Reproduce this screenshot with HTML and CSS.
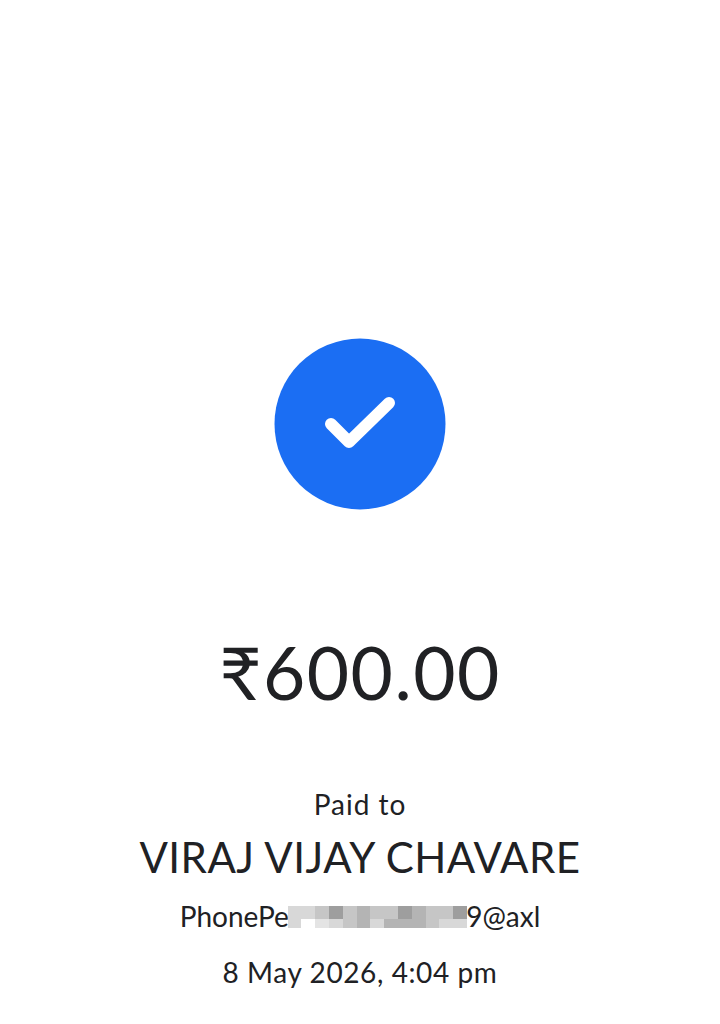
FILE: index.html
```html
<!DOCTYPE html>
<html lang="en">
<head>
    <meta charset="UTF-8">
    <meta name="viewport" content="width=device-width, initial-scale=1.0">
    <title>Payment successful</title>
    <link rel="stylesheet" href="styles.css">
</head>
<body>
    <div class="receipt">
        <svg class="tick" width="172" height="172" viewBox="0 0 172 172">
            <circle cx="86" cy="86" r="85.5" fill="#1b6ef3"/>
            <path d="M57 86 L75 104 L115 65" fill="none" stroke="#fff" stroke-width="12" stroke-linecap="round" stroke-linejoin="round"/>
        </svg>
        <div class="amount">₹600.00</div>
        <div class="paid-to">Paid to</div>
        <div class="name">VIRAJ VIJAY CHAVARE</div>
        <div class="upi">
            PhonePe<span class="hidden-part">xxxxxxxxxxxxx</span>9@axl
            <div class="blur">
                <i class="r2"></i><i class="r2"></i><i class="r3"></i><i class="r5"></i><i class="r3"></i><i class="r4"></i><i class="r3"></i><i class="r3"></i><i class="r5"></i><i class="r4"></i><i class="r3"></i><i class="r3"></i><i class="r5"></i>
                <i class="r2"></i><i class="r0"></i><i class="r1"></i><i class="r2"></i><i class="r3"></i><i class="r4"></i><i class="r2"></i><i class="r4"></i><i class="r4"></i><i class="r4"></i><i class="r3"></i><i class="r2"></i><i class="r2"></i>
            </div>
        </div>
        <div class="date">8 May 2026, 4:04 pm</div>
    </div>
</body>
</html>
```

FILE: styles.css
```css
body {
    margin: 0;
    background: #fff;
    color: #202124;
    font-family: Lato, "Noto Sans", sans-serif;
}
.receipt {
    display: flex;
    flex-direction: column;
    align-items: center;
    padding-top: 338px;
}
.tick {
    display: block;
}
.amount {
    margin-top: 120px;
    font-size: 73px;
    line-height: 84px;
    letter-spacing: 1.5px;
}
.paid-to {
    margin-top: 72px;
    font-size: 28px;
    line-height: 36px;
    letter-spacing: 1px;
}
.name {
    margin-top: 9px;
    font-size: 42px;
    line-height: 52px;
    letter-spacing: 0.5px;
}
.upi {
    position: relative;
    margin-top: 15px;
    font-size: 28px;
    line-height: 36px;
}
.hidden-part {
    visibility: hidden;
    letter-spacing: -0.3px;
}
.blur {
    position: absolute;
    left: 108px;
    top: 8px;
    display: grid;
    grid-template-columns: repeat(13, 13.8px);
    grid-template-rows: 13px 9px;
}
.r0 { background: #fff; }
.r1 { background: #e4e4e4; }
.r2 { background: #d8d8d8; }
.r3 { background: #c6c6c6; }
.r4 { background: #b4b4b4; }
.r5 { background: #9e9e9e; }
.date {
    margin-top: 20px;
    font-size: 28px;
    line-height: 36px;
    letter-spacing: 0.6px;
}
```
